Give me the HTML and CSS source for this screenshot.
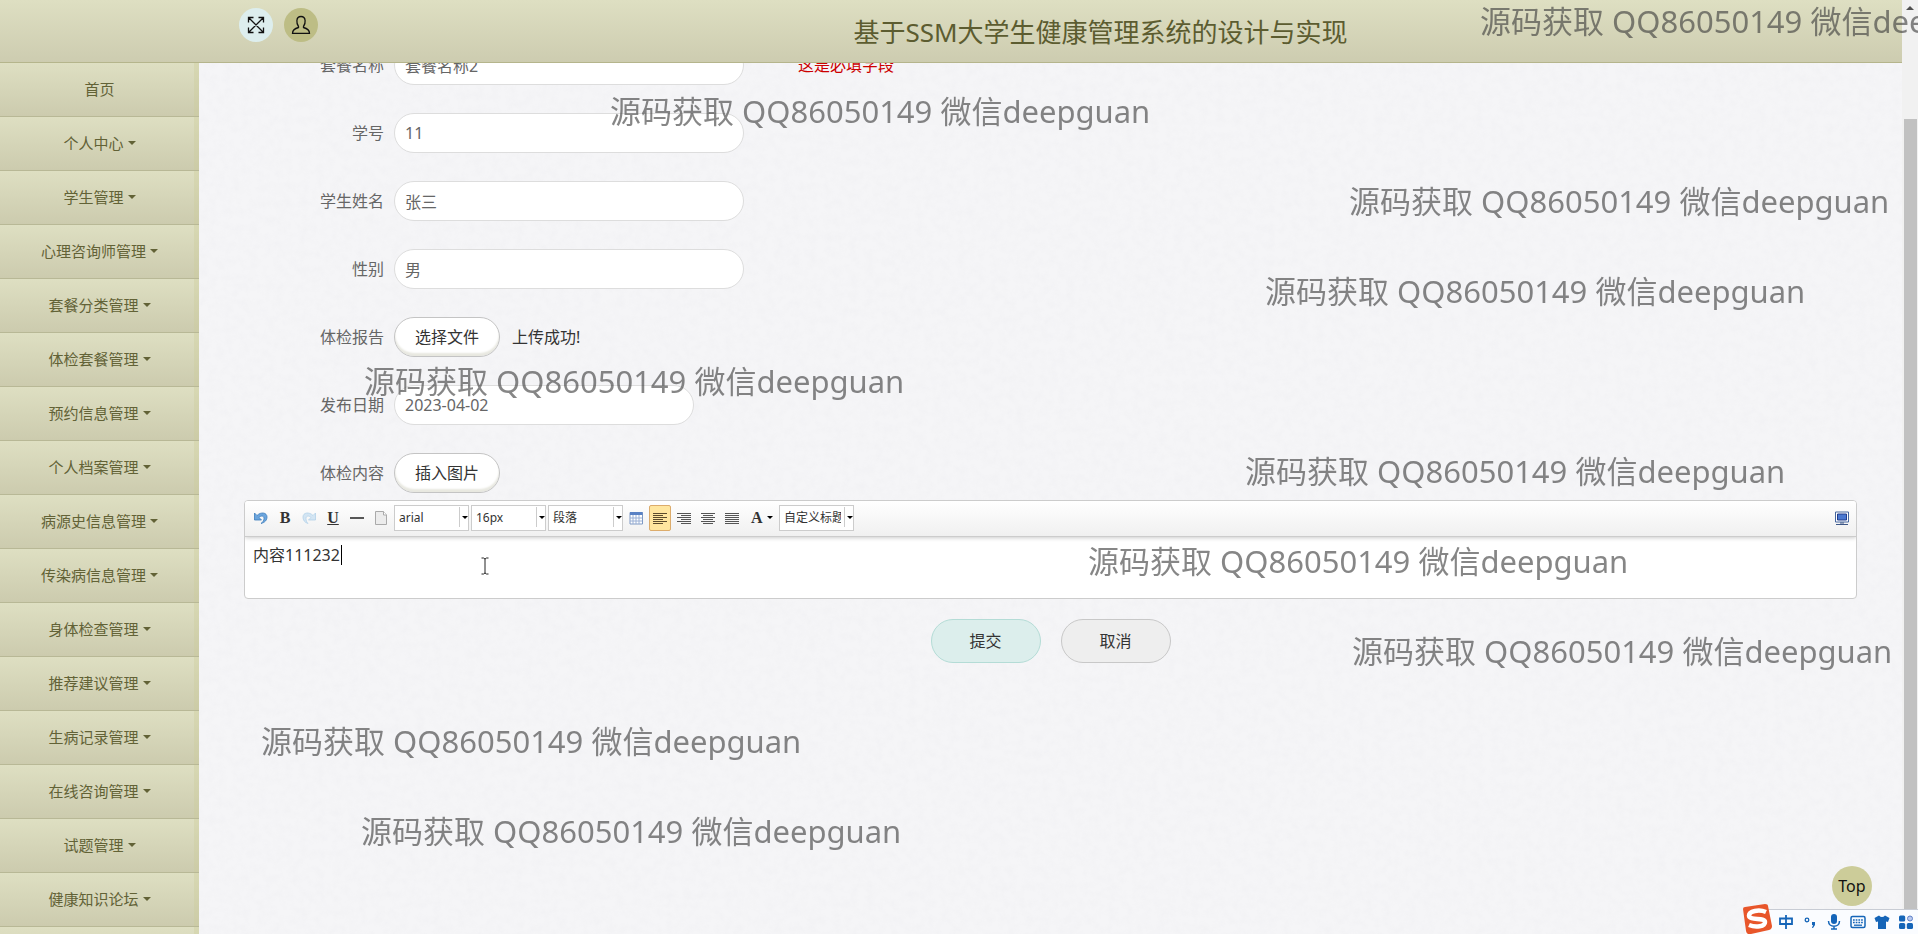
FILE: index.html
```html
<!DOCTYPE html>
<html lang="zh-CN">
<head>
<meta charset="utf-8">
<title>基于SSM大学生健康管理系统的设计与实现</title>
<link rel="stylesheet" href="styles.css">
</head>
<body>
<svg class="paper" aria-hidden="true">
  <filter id="grain"><feTurbulence type="fractalNoise" baseFrequency="0.12" numOctaves="4" seed="4"/><feColorMatrix values="0 0 0 0 0.5  0 0 0 0 0.5  0 0 0 0 0.56  0 0 0.9 0 -0.32"/></filter>
  <rect width="100%" height="100%" filter="url(#grain)"/>
</svg>
<header class="topbar">
  <button class="round-btn round-btn-light" aria-label="全屏">
    <svg width="18" height="18" viewBox="0 0 18 18" fill="none" stroke="#111" stroke-width="1.3"><path d="M1.5 1.5l15 15M16.500 1.500l-15 15M1.500 6.500v-5h5M11.500 1.500h5v5M16.500 11.500v5h-5M6.500 16.500h-5v-5"/></svg>
  </button>
  <button class="round-btn round-btn-olive" aria-label="用户">
    <svg width="20" height="20" viewBox="0 0 20 20" fill="none" stroke="#111" stroke-width="1.3"><path d="M7.500 11.500C6 9.500 5.700 7.500 5.900 5.500 6.100 3 7.500 1.500 10 1.500s3.900 1.500 4.100 4c.2 2-.1 4-1.600 6v1c3 .8 6 1.700 6 5.900H1.500c0-4.200 3-5.100 6-5.900z"/></svg>
  </button>
  <h1 class="title">基于SSM大学生健康管理系统的设计与实现</h1>
</header>
<div class="layout">
  <nav class="sidebar">
    <a class="nav-item" href="#">首页</a>
    <a class="nav-item has-menu" href="#">个人中心</a>
    <a class="nav-item has-menu" href="#">学生管理</a>
    <a class="nav-item has-menu" href="#">心理咨询师管理</a>
    <a class="nav-item has-menu" href="#">套餐分类管理</a>
    <a class="nav-item has-menu" href="#">体检套餐管理</a>
    <a class="nav-item has-menu" href="#">预约信息管理</a>
    <a class="nav-item has-menu" href="#">个人档案管理</a>
    <a class="nav-item has-menu" href="#">病源史信息管理</a>
    <a class="nav-item has-menu" href="#">传染病信息管理</a>
    <a class="nav-item has-menu" href="#">身体检查管理</a>
    <a class="nav-item has-menu" href="#">推荐建议管理</a>
    <a class="nav-item has-menu" href="#">生病记录管理</a>
    <a class="nav-item has-menu" href="#">在线咨询管理</a>
    <a class="nav-item has-menu" href="#">试题管理</a>
    <a class="nav-item has-menu" href="#">健康知识论坛</a>
    <a class="nav-item" href="#" aria-label="更多"></a>
  </nav>
  <main class="content">
    <form class="form">
      <div class="row"><label class="label" for="pkg">套餐名称</label><input class="field" id="pkg" value="套餐名称2"><span class="error">这是必填字段</span></div>
      <div class="row"><label class="label" for="sno">学号</label><input class="field" id="sno" value="11"></div>
      <div class="row"><label class="label" for="sname">学生姓名</label><input class="field" id="sname" value="张三"></div>
      <div class="row"><label class="label" for="sex">性别</label><input class="field" id="sex" value="男"></div>
      <div class="row"><label class="label" for="report">体检报告</label><button type="button" class="pill" id="report">选择文件</button><span class="status">上传成功!</span></div>
      <div class="row"><label class="label" for="date">发布日期</label><input class="field field-date" id="date" value="2023-04-02"></div>
      <div class="row row-last"><label class="label" for="picture">体检内容</label><button type="button" class="pill" id="picture">插入图片</button></div>
      <div class="editor">
        <div class="toolbar">
          <button type="button" class="tool" aria-label="撤销"><svg width="16" height="16" viewBox="0 0 16 16"><path d="M1.500 3v7h7L6 7.500c2-2 5-2 5 1 0 2-1 3.500-3 5 4-1 6-3.500 6-6.500C14 2.500 8 1.500 4 5.500z" fill="#6ba5dd" stroke="#3e7dbd" stroke-width=".8"/></svg></button>
          <button type="button" class="tool tool-letter">B</button>
          <button type="button" class="tool" aria-label="重做"><svg width="16" height="16" viewBox="0 0 16 16"><path d="M14.500 3v7h-7L10 7.500c-2-2-5-2-5 1 0 2 .5 3.500 2 5-3.500-1-5-3.500-5-6.500C2 2.500 8 1.500 12 5.500z" fill="#d3e5f3" stroke="#b4d2e8" stroke-width=".8"/></svg></button>
          <button type="button" class="tool tool-letter tool-underline">U</button>
          <button type="button" class="tool" aria-label="分隔线"><svg width="16" height="16"><path d="M1 8h14" stroke="#222" stroke-width="1.500"/></svg></button>
          <button type="button" class="tool" aria-label="清空文档"><svg width="16" height="16" viewBox="0 0 16 16"><path d="M2.500 1.500h8l3 3.500v9.500h-11z" fill="#ececec" stroke="#aaa"/><path d="M10.500 1.500v3.500h3" fill="#fff" stroke="#aaa"/></svg></button>
          <span class="picker"><select aria-label="字体"><option>arial</option></select></span>
          <span class="picker"><select aria-label="字号"><option>16px</option></select></span>
          <span class="picker"><select aria-label="段落格式"><option>段落</option></select></span>
          <button type="button" class="tool" aria-label="表格"><svg width="16" height="16" viewBox="0 0 16 16"><path d="M2 2.500h12.500v11.500H2z" fill="#fff" stroke="#7e99c4"/><path d="M2 2h12.500v3H2z" fill="#5a82c4"/><path d="M2 8h12M2 11h12M5 5v9M8 5v9M11 5v9" stroke="#9ab0d5"/></svg></button>
          <button type="button" class="tool tool-active" aria-label="左对齐"><svg width="16" height="16"><path d="M1 3.500h14M1 5.500h10M1 7.500h14M1 9.500h10M1 11.500h14M1 13.500h10" stroke="#5b4b2c"/></svg></button>
          <button type="button" class="tool" aria-label="右对齐"><svg width="16" height="16"><path d="M1 3.500h14M5 5.500h10M1 7.500h14M5 9.500h10M1 11.500h14M5 13.500h10" stroke="#555"/></svg></button>
          <button type="button" class="tool" aria-label="居中"><svg width="16" height="16"><path d="M1 3.500h14M3 5.500h10M1 7.500h14M3 9.500h10M1 11.500h14M3 13.500h10" stroke="#555"/></svg></button>
          <button type="button" class="tool" aria-label="两端对齐"><svg width="16" height="16"><path d="M1 3.500h14M1 5.500h14M1 7.500h14M1 9.500h14M1 11.500h14M1 13.500h14" stroke="#555"/></svg></button>
          <button type="button" class="tool tool-letter tool-color">A</button>
          <span class="picker"><select aria-label="自定义标题"><option>自定义标题</option></select></span>
          <button type="button" class="tool tool-end" aria-label="全屏编辑"><svg width="16" height="16" viewBox="0 0 16 16"><path d="M1.500 2h13v10h-13z" fill="#fff" stroke="#46669e"/><path d="M3.500 4h9v6h-9z" fill="#4a78d0" stroke="#223d8c"/><path d="M6 13h4M2 14.500h12" stroke="#3c5686"/></svg></button>
        </div>
        <textarea class="editor-text" aria-label="体检内容">内容111232</textarea>
        <span class="caret"></span>
        <svg class="ibeam" width="8" height="18" viewBox="0 0 8 18" fill="none" stroke="#222"><path d="M.5 1h2l1.500 1 1.500-1h2M4 2v14M.5 17h2l1.500-1 1.500 1h2"/></svg>
      </div>
      <div class="actions">
        <button type="button" class="action action-submit">提交</button>
        <button type="button" class="action">取消</button>
      </div>
    </form>
  </main>
</div>
<a class="to-top" href="#">Top</a>
<div class="scrollbar"><div class="scroll-arrow"></div><div class="scroll-thumb"></div></div>
<div class="marks">
  <span class="mark m1">源码获取 QQ86050149 微信deepguan</span>
  <span class="mark m2">源码获取 QQ86050149 微信deepguan</span>
  <span class="mark m3">源码获取 QQ86050149 微信deepguan</span>
  <span class="mark m4">源码获取 QQ86050149 微信deepguan</span>
  <span class="mark m5">源码获取 QQ86050149 微信deepguan</span>
  <span class="mark m6">源码获取 QQ86050149 微信deepguan</span>
  <span class="mark m7">源码获取 QQ86050149 微信deepguan</span>
  <span class="mark m8">源码获取 QQ86050149 微信deepguan</span>
  <span class="mark m9">源码获取 QQ86050149 微信deepguan</span>
  <span class="mark m10">源码获取 QQ86050149 微信deepguan</span>
</div>
<div class="ime">
  <svg class="ime-logo" width="34" height="32" viewBox="0 0 34 32"><path d="M3 6q0-2 2-2l20-3q3 0 3 2l4 20q0 3-3 4L11 31q-4 1-5-3z" fill="#e8562a"/><path d="M26 9C19 6 9 8 9 12.500c0 5.500 16 1.500 16 6.500 0 4.500-9 6-16 3" fill="none" stroke="#fff" stroke-width="4.500"/></svg>
  <svg width="16" height="16" viewBox="0 0 16 16" fill="none" stroke="#1565b8" stroke-width="1.800"><path d="M2 4.500h12v5.500H2zM8 1v14"/></svg>
  <svg width="16" height="16" viewBox="0 0 16 16"><circle cx="5" cy="6" r="1.800" fill="none" stroke="#1565b8" stroke-width="1.300"/><path d="M10 8h3v3l-2 3h-1l1-3h-1z" fill="#1565b8"/></svg>
  <svg width="16" height="16" viewBox="0 0 16 16"><rect x="5" y="0" width="6" height="10" rx="3" fill="#1565b8"/><path d="M2.500 7c0 7 11 7 11 0M8 12v3M5 15h6" fill="none" stroke="#1565b8" stroke-width="1.500"/></svg>
  <svg width="16" height="16" viewBox="0 0 16 16"><rect x="1" y="2.500" width="14" height="11" rx="1.500" fill="none" stroke="#1565b8" stroke-width="1.500"/><path d="M3 6h10M3 8.500h10" stroke="#1565b8" stroke-width="1.500" stroke-dasharray="1.700 1"/><path d="M4 11.200h8" stroke="#1565b8" stroke-width="1.300"/></svg>
  <svg width="16" height="16" viewBox="0 0 16 16"><path d="M5 1.500q3 3 6 0l4.500 2.500-1.500 4-2-.6V15H4V7.400L2 8 .5 4z" fill="#1565b8"/></svg>
  <svg width="16" height="16" viewBox="0 0 16 16" fill="#1565b8"><rect x="1" y="1.500" width="6.200" height="6" rx="1.500"/><circle cx="12" cy="4.500" r="2.500" fill="#b9c9ee" stroke="#5d7fc7"/><rect x="1" y="9" width="6.200" height="6" rx="1.500"/><rect x="8.800" y="9" width="6.200" height="6" rx="1.500"/></svg>
</div>
</body>
</html>
```
FILE: styles.css
```css
* { box-sizing: border-box; }
body {
  margin: 0;
  height: 100vh;
  overflow: hidden;
  position: relative;
  background: #f5f5f7;
  color: #333;
  font: 16px/24px "Noto Sans", "Noto Sans CJK SC", sans-serif;
}
button, input, select, textarea { font: inherit; color: inherit; }
a { text-decoration: none; }
.paper { position: absolute; inset: 0; width: 100%; height: 100%; opacity: 0.1; }

.topbar {
  position: fixed;
  z-index: 2;
  top: 0;
  left: 0;
  right: 16px;
  height: 63px;
  display: flex;
  align-items: flex-start;
  gap: 11px;
  padding: 8px 30px 0 239px;
  background: linear-gradient(#dedfc2, #cdccb0);
  border-bottom: 1px solid #b5b58c;
}
.round-btn {
  width: 34px;
  height: 34px;
  padding: 0;
  border: 0;
  border-radius: 50%;
  display: grid;
  place-items: center;
}
.round-btn-light { background: #ddeeee; }
.round-btn-olive { background: #bdbd85; }
.title {
  flex: 1;
  margin: 0;
  color: #5c5c30;
  font-size: 26px;
  font-weight: 400;
  line-height: 48px;
  text-align: center;
}

.layout {
  position: relative;
  display: flex;
  align-items: flex-start;
  height: 100vh;
  padding-right: 16px;
  overflow: hidden;
}
.sidebar { width: 199px; flex: none; padding-top: 63px; }
.nav-item {
  display: flex;
  align-items: center;
  justify-content: center;
  gap: 4px;
  height: 54px;
  padding: 0 4px 1px;
  border-bottom: 1px solid #b8b896;
  background: linear-gradient(#dedfc2, #cccbae);
  box-shadow: inset -5px 0 0 rgba(204, 204, 153, 0.35);
  color: #626236;
  font-size: 15px;
}
.has-menu::after { content: ""; border: 4px solid transparent; border-top-color: #626236; border-bottom: 0; }

.content { flex: 1; min-width: 0; padding: 45px 45px 0; }
.row { display: flex; align-items: center; height: 40px; margin-bottom: 28px; }
.row-last { margin-bottom: 7px; }
.label { width: 140px; margin-right: 10px; text-align: right; color: #666; }
.field {
  width: 350px;
  height: 40px;
  padding: 0 10px;
  border: 1px solid #ddd;
  border-radius: 20px;
  background: #fff;
  color: #666;
  outline: 0;
}
.field-date { width: 300px; }
.error { margin-left: 54px; color: #c00; }
.status { margin-left: 12px; }
.pill {
  width: 106px;
  height: 40px;
  padding: 0;
  border: 1px solid #c4c4c4;
  border-radius: 20px;
  background: #fff;
  box-shadow: inset 0 -3px 2px #e8e8e0;
}

.editor { position: relative; border: 1px solid #ccc; border-radius: 4px; background: #fff; overflow: hidden; }
.toolbar {
  display: flex;
  align-items: center;
  gap: 2px;
  height: 36px;
  padding: 0 3px 2px 5px;
  background: linear-gradient(#fff, #f0f0f0);
  border-bottom: 1px solid #ccc;
  box-shadow: 0 1px 4px #ccc;
}
.tool {
  width: 22px;
  height: 26px;
  padding: 0;
  border: 1px solid transparent;
  border-radius: 2px;
  background: none;
  display: grid;
  place-items: center;
}
.tool-active { background: #ffe69f; border-color: #dcac6c; }
.tool-letter { font: bold 16px/20px "Liberation Serif", serif; color: #333; }
.tool-underline { text-decoration: underline; }
.tool-color { width: 32px; display: flex; align-items: center; justify-content: space-between; padding: 0 3px 0 5px; }
.tool-color::after { content: ""; border: 3px solid transparent; border-top-color: #000; border-bottom: 0; }
.tool-end { margin-left: auto; }
.picker { position: relative; width: 75px; height: 26px; border: 1px solid #ccc; background: #fff; }
.picker select {
  appearance: none;
  display: block;
  width: 61px;
  height: 24px;
  padding: 0 0 0 4px;
  border: 0;
  background: none;
  font-size: 12px;
  outline: 0;
}
.picker::after {
  content: "";
  position: absolute;
  top: 10px;
  right: 0;
  border: 3px solid transparent;
  border-top-color: #000;
  border-bottom: 0;
}
.picker::before { content: ""; position: absolute; top: 1px; right: 8px; width: 1px; height: 20px; background: #ccc; }
.editor-text {
  display: block;
  width: 100%;
  height: 61px;
  padding: 6px 8px;
  border: 0;
  background: none;
  resize: none;
  outline: 0;
}
.caret { position: absolute; left: 96px; top: 44px; width: 1px; height: 20px; background: #000; }
.ibeam { position: absolute; left: 236px; top: 56px; }

.actions { display: flex; justify-content: center; gap: 20px; margin-top: 20px; }
.action {
  width: 110px;
  height: 44px;
  border: 1px solid #c8c8c8;
  border-radius: 22px;
  background: #eee;
}
.action-submit { background: #dceeec; border-color: #b4dcd6; }

.to-top {
  position: fixed;
  right: 46px;
  bottom: 28px;
  width: 40px;
  height: 40px;
  border-radius: 50%;
  background: #cccc99;
  color: #111;
  line-height: 40px;
  text-align: center;
}
.scrollbar { position: fixed; z-index: 3; top: 0; right: 0; bottom: 0; width: 16px; padding: 6px 1px 0 2px; background: #f1f1f1; }
.scroll-arrow { width: 8px; margin: 0 0 109px 2px; border: 4px solid transparent; border-top: 0; border-bottom-color: #505050; }
.scroll-thumb { height: 100%; background: #c1c1c1; }

.marks { position: absolute; z-index: 4; inset: 0; overflow: hidden; pointer-events: none; }
.mark { position: absolute; color: rgba(60, 60, 60, 0.62); font-size: 31px; line-height: 40px; white-space: nowrap; }
.m1 { left: 1480px; top: 1px; }
.m2 { left: 610px; top: 91px; }
.m3 { left: 1349px; top: 181px; }
.m4 { left: 1265px; top: 271px; }
.m5 { left: 364px; top: 361px; }
.m6 { left: 1245px; top: 451px; }
.m7 { left: 1088px; top: 541px; }
.m8 { left: 1352px; top: 631px; }
.m9 { left: 261px; top: 721px; }
.m10 { left: 361px; top: 811px; }

.ime {
  position: fixed;
  z-index: 5;
  right: 0;
  bottom: 0;
  display: flex;
  align-items: center;
  gap: 8px;
  height: 25px;
  padding-right: 4px;
  background: #fafcff;
  border-top: 1px solid #c8ccd4;
}
.ime-logo { margin: -6px -4px 0 -5px; }
```
